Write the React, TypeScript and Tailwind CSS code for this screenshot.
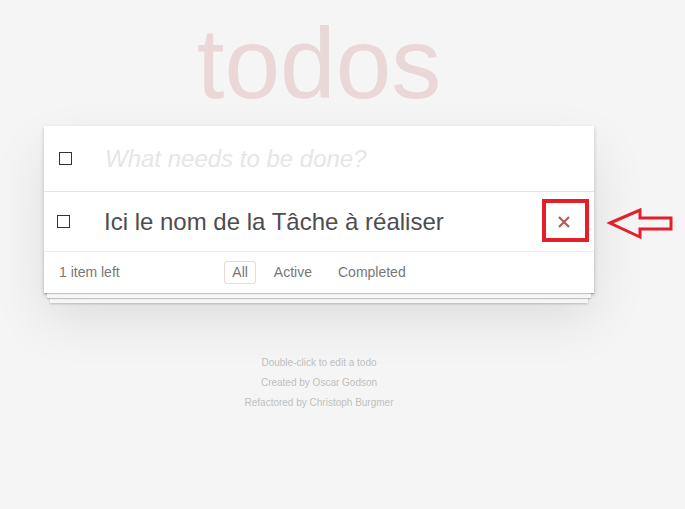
import React from 'react';

// Unchecked square checkbox, drawn as a box
const Box: React.FC<{ className?: string }> = ({ className = '' }) => (
  <span className={`block w-[13px] h-[13px] border-[1.5px] border-[#333] bg-white ${className}`} />
);

const filters = ['All', 'Active', 'Completed'];

const App: React.FC = () => {
  return (
    <div className="relative min-h-[509px] bg-[#f5f5f5] font-['Liberation_Sans',Arial,sans-serif] overflow-hidden">
      <div className="ml-[44px] w-[550px] pt-[13px]">
        <h1 className="text-center text-[100px] leading-[100px] font-normal text-[rgba(175,47,47,0.15)]">
          todos
        </h1>

        {/* Todo card */}
        <div className="mt-[13px] bg-white shadow-[0_2px_4px_0_rgba(0,0,0,0.2),0_25px_50px_0_rgba(0,0,0,0.1)]">
          <div className="flex items-center h-[66px] border-b border-[#e6e6e6]">
            <Box className="ml-[15px] w-[12px] h-[12px]" />
            <span className="ml-[33px] text-[24px] italic text-[#e6e6e6]">What needs to be done?</span>
          </div>

          <div className="flex items-center h-[60px] border-b border-[#ededed]">
            <Box className="ml-[13px]" />
            <span className="ml-[34px] text-[24px] text-[#4d4d4d]">Ici le nom de la Tâche à réaliser</span>
            <span className="ml-auto mr-[10px] w-[40px] h-[40px] flex items-center justify-center">
              <svg width="12" height="12" viewBox="0 0 12 12">
                <path d="M1 1L11 11M11 1L1 11" stroke="#af5b5e" strokeWidth="2.2" strokeLinecap="butt" />
              </svg>
            </span>
          </div>

          <div className="grid grid-cols-[1fr_auto_1fr] items-center h-[41px] px-[15px] text-[14px] text-[#777] shadow-[0_1px_1px_rgba(0,0,0,0.2),0_8px_0_-3px_#f6f6f6,0_9px_1px_-3px_rgba(0,0,0,0.2),0_16px_0_-6px_#f6f6f6,0_17px_2px_-6px_rgba(0,0,0,0.2)]">
            <span>1 item left</span>
            <div className="flex gap-[10px]">
              {filters.map((f) => (
                <span
                  key={f}
                  className={`px-[7px] py-[3px] leading-[15px] rounded-[3px] border ${
                    f === 'All' ? 'border-[rgba(175,47,47,0.2)]' : 'border-transparent'
                  }`}
                >
                  {f}
                </span>
              ))}
            </div>
            <span />
          </div>
        </div>

        {/* Info */}
        <div className="mt-[60px] flex flex-col items-center text-[10px] leading-[20px] text-[#bfbfbf]">
          <p>Double-click to edit a todo</p>
          <p>Created by Oscar Godson</p>
          <p>Refactored by Christoph Burgmer</p>
        </div>
      </div>

      {/* Annotation: red frame around the delete button */}
      <div className="absolute left-[542px] top-[199px] w-[47px] h-[43px] border-4 border-[#e3202a]" />

      {/* Annotation: hollow arrow */}
      <svg className="absolute left-[606px] top-[206px]" width="70" height="34" viewBox="0 0 70 34">
        <polygon
          points="4,17 34,4 34,12 65,12 65,23 34,23 34,31"
          fill="none"
          stroke="#e3202a"
          strokeWidth="3"
          strokeLinejoin="miter"
        />
      </svg>
    </div>
  );
};

export default App;
